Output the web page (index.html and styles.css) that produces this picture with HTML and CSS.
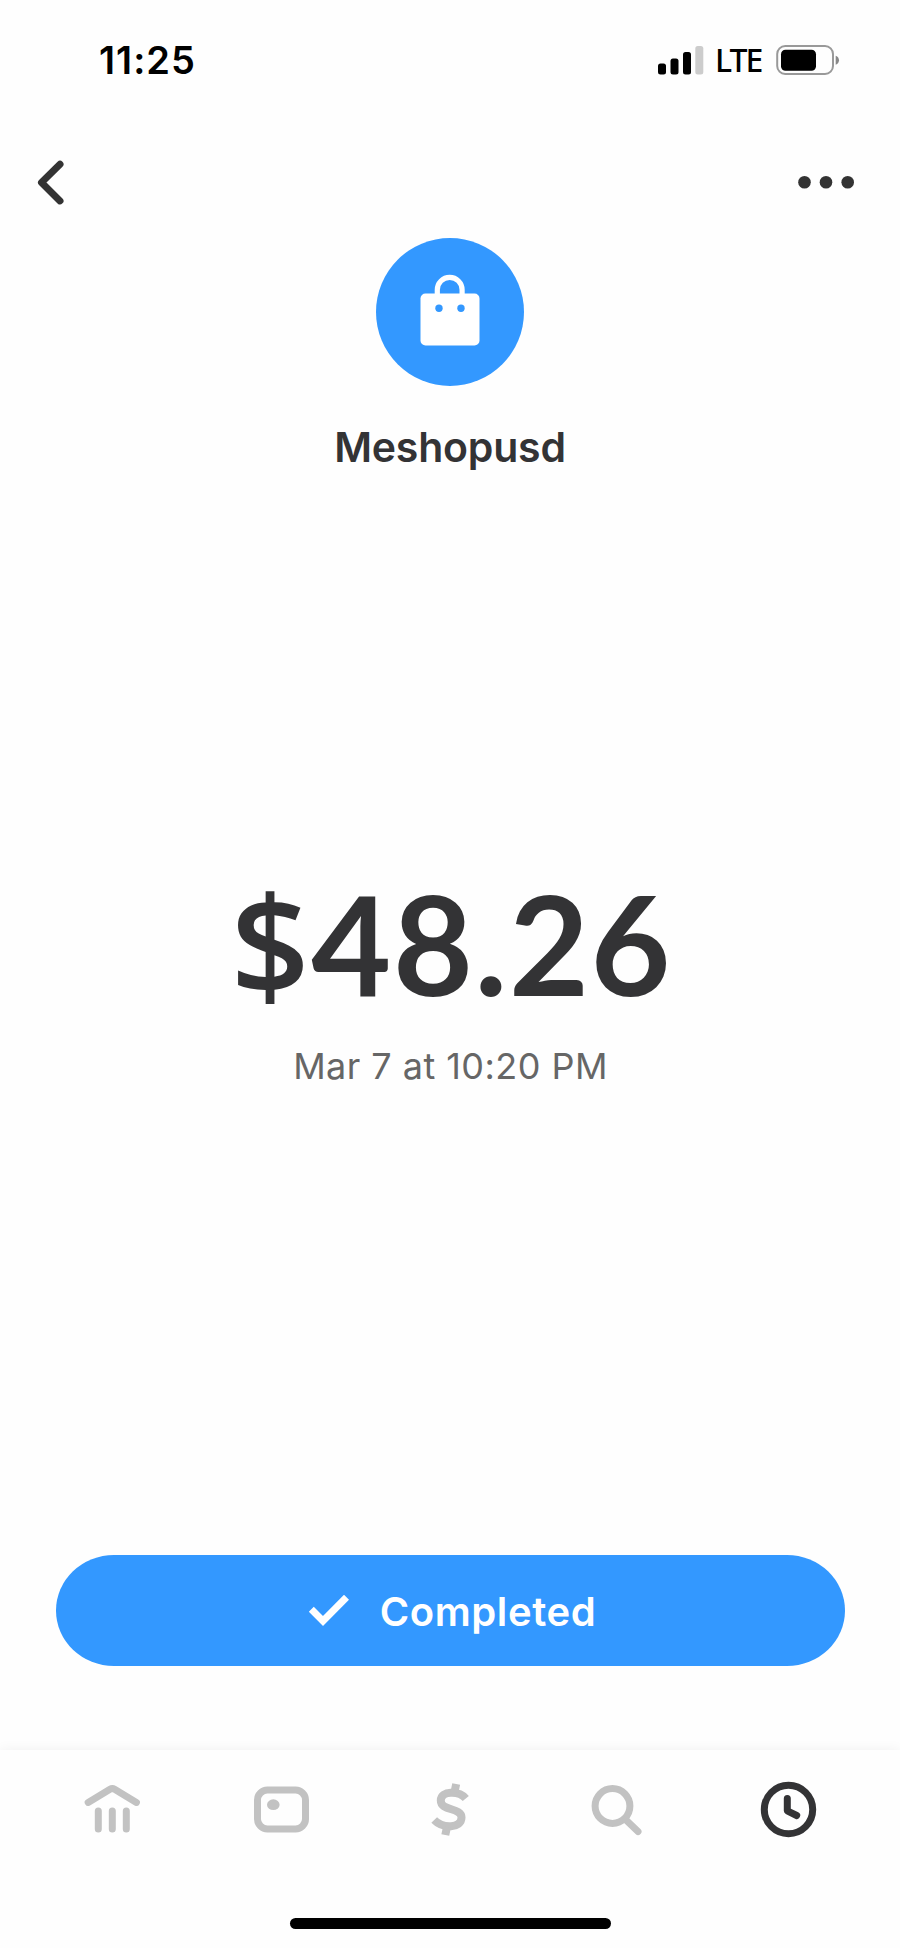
FILE: index.html
```html
<!DOCTYPE html>
<html lang="en">
<head>
    <meta charset="UTF-8">
    <meta name="viewport" content="width=device-width, initial-scale=1.0">
    <title>Payment Details</title>
    <link rel="stylesheet" href="styles.css">
</head>
<body>
    <div class="status-bar">
        <span class="time">11:25</span>
        <div class="status-icons">
            <svg class="signal" width="46" height="30" viewBox="0 0 46 30">
                <rect x="0" y="18.5" width="8" height="11" rx="2.5"/>
                <rect x="12.5" y="13.5" width="8" height="16" rx="2.5"/>
                <rect x="25" y="7" width="8" height="22.5" rx="2.5"/>
                <rect x="37.3" y="1" width="8" height="28.5" rx="2.5" fill="#ccc"/>
            </svg>
            <span class="network">LTE</span>
            <svg class="battery" width="64" height="30" viewBox="0 0 64 30">
                <rect x="1.2" y="1" width="55.8" height="28" rx="8" fill="none" stroke="#999" stroke-width="2"/>
                <rect x="5" y="4.7" width="35" height="21" rx="4.5"/>
                <path d="M59.7 10.7c4.4 1.6 4.4 7.4 0 9z" fill="#888"/>
            </svg>
        </div>
    </div>

    <header class="header">
        <button class="icon-button" aria-label="Back">
            <svg width="28" height="46" viewBox="0 0 28 46">
                <path d="M23 4.2L4.5 22.5L23 40.9" fill="none" stroke="#333" stroke-width="7" stroke-linecap="round" stroke-linejoin="round"/>
            </svg>
        </button>
        <button class="icon-button" aria-label="More">
            <svg width="56" height="14" viewBox="0 0 56 14" fill="#333">
                <circle cx="6.5" cy="6.3" r="6.3"/>
                <circle cx="28" cy="6.3" r="6.3"/>
                <circle cx="49.7" cy="6.3" r="6.3"/>
            </svg>
        </button>
    </header>

    <main class="payment">
        <div class="avatar">
            <svg width="60" height="72" viewBox="0 0 60 72">
                <rect x="0.5" y="19.5" width="59" height="52" rx="5" fill="#fff"/>
                <path d="M17.3 21v-5.2a12.4 12.4 0 0 1 24.8 0v5.2" fill="none" stroke="#fff" stroke-width="5.2"/>
                <circle cx="19" cy="34.3" r="3.7" fill="#3398ff"/>
                <circle cx="41" cy="34.3" r="3.7" fill="#3398ff"/>
            </svg>
        </div>
        <h1 class="merchant">Meshopusd</h1>
        <div class="amount"><span class="currency">$</span>48.26</div>
        <p class="date">Mar 7 at 10:20 PM</p>
        <button class="completed-button">
            <svg class="check" width="42" height="32" viewBox="0 0 42 32">
                <path d="M3.3 14.3L15 26L38.5 2.2" fill="none" stroke="#fff" stroke-width="7"/>
            </svg>
            <span class="completed-label">Completed</span>
        </button>
    </main>

    <footer class="footer">
        <nav class="tab-bar">
            <a href="#home" class="tab" aria-label="Banking">
                <svg width="60" height="60" viewBox="0 0 60 60">
                    <path d="M6.2 22.4L28 9.3q2.3-1.4 4.6 0L54.4 22.4M16.3 31v18M30.3 31v18M44.3 31v18"/>
                </svg>
            </a>
            <a href="#card" class="tab" aria-label="Card">
                <svg width="60" height="60" viewBox="0 0 60 60">
                    <rect x="6.5" y="10" width="48" height="39" rx="10"/>
                    <ellipse class="filled" cx="22.3" cy="24.7" rx="6.3" ry="5.4"/>
                </svg>
            </a>
            <a href="#pay" class="tab" aria-label="Pay">
                <svg width="60" height="60" viewBox="0 0 60 60">
                    <path class="dollar" d="M45.8 18.5C39 10.5 20.8 10.5 20.8 20.5C20.8 31.5 41.5 27 41.5 37.5C41.5 48.5 23 49 14.2 40"/>
                    <path class="dollar" d="M36.2 4L34.5 12M25.3 55L27 47"/>
                </svg>
            </a>
            <a href="#search" class="tab" aria-label="Search">
                <svg width="60" height="60" viewBox="0 0 60 60">
                    <circle cx="23.5" cy="26" r="17.4"/>
                    <path d="M37 40L49 51.5"/>
                </svg>
            </a>
            <a href="#activity" class="tab active" aria-label="Activity">
                <svg width="60" height="60" viewBox="0 0 60 60">
                    <circle cx="30.5" cy="29.5" r="24.2"/>
                    <path d="M29.3 18.5v12.3l9.4 4.7"/>
                </svg>
            </a>
        </nav>
        <div class="home-indicator"></div>
    </footer>
</body>
</html>
```
FILE: styles.css
```css
:root {
    --blue: #3398ff;
    --text-primary: #333335;
    --text-secondary: #666;
    --inactive: #c2c2c2;
}

* {
    margin: 0;
    padding: 0;
    box-sizing: border-box;
}

body {
    width: 900px;
    height: 1948px;
    font-family: 'Inter', sans-serif;
    background: #fefefe;
    color: var(--text-primary);
    display: flex;
    flex-direction: column;
    overflow: hidden;
}

svg {
    display: block;
}

button {
    border: none;
    background: none;
    font-family: inherit;
    cursor: pointer;
}

.status-bar {
    height: 120px;
    padding: 0 60px 0 99px;
    display: flex;
    justify-content: space-between;
    align-items: center;
    color: #000;
}

.time {
    font-size: 38px;
    font-weight: 600;
    letter-spacing: 1px;
}

.status-icons {
    display: flex;
    align-items: center;
}

.network {
    font-family: 'Noto Sans', sans-serif;
    font-size: 32px;
    font-weight: 500;
    letter-spacing: -2px;
    line-height: 40px;
    width: 72px;
    padding-left: 11px;
}

.header {
    height: 118px;
    padding: 7px 46px 0 37px;
    display: flex;
    justify-content: space-between;
    align-items: center;
}

.payment {
    flex: 1;
    display: flex;
    flex-direction: column;
    align-items: center;
}

.avatar {
    width: 148px;
    height: 148px;
    border-radius: 50%;
    background: var(--blue);
    display: flex;
    justify-content: center;
    padding-top: 35.5px;
}

.merchant {
    margin-top: 36px;
    font-size: 41px;
    font-weight: 600;
    letter-spacing: -0.2px;
    line-height: 50px;
}

.amount {
    margin-top: 388px;
    padding-left: 3px;
    font-family: 'Lato', sans-serif;
    font-size: 138px;
    font-weight: 700;
    letter-spacing: 1.6px;
    line-height: 166px;
}

.currency {
    font-family: 'Open Sans', sans-serif;
    font-weight: 600;
    line-height: 1;
}

.date {
    margin-top: 18px;
    padding-left: 1px;
    font-size: 36px;
    letter-spacing: 0.45px;
    line-height: 44px;
    color: var(--text-secondary);
}

.completed-button {
    width: 789px;
    height: 111px;
    margin-top: 467px;
    padding-left: 4px;
    border-radius: 58px / 55.5px;
    background: var(--blue);
    color: #fff;
    font-size: 40px;
    font-weight: 600;
    letter-spacing: 0.6px;
    display: flex;
    justify-content: center;
    align-items: center;
    gap: 30px;
}

.completed-label {
    padding-top: 2px;
}

.footer {
    height: 198px;
    background: #fefefe;
    box-shadow: 0 0 12px rgba(0, 0, 0, 0.06);
}

.tab-bar {
    height: 168px;
    padding: 30px 82px 0;
    display: flex;
    justify-content: space-between;
}

.tab {
    width: 60px;
    height: 60px;
    color: var(--inactive);
}

.tab.active {
    color: var(--text-primary);
}

.tab svg {
    fill: none;
    stroke: currentColor;
    stroke-width: 7;
    stroke-linecap: round;
    stroke-linejoin: round;
}

.tab .filled {
    fill: currentColor;
    stroke: none;
}

.tab .dollar {
    stroke-width: 8;
    stroke-linecap: butt;
}

.home-indicator {
    width: 321px;
    height: 11px;
    margin: 0 auto;
    border-radius: 6px;
    background: #000;
}
```
